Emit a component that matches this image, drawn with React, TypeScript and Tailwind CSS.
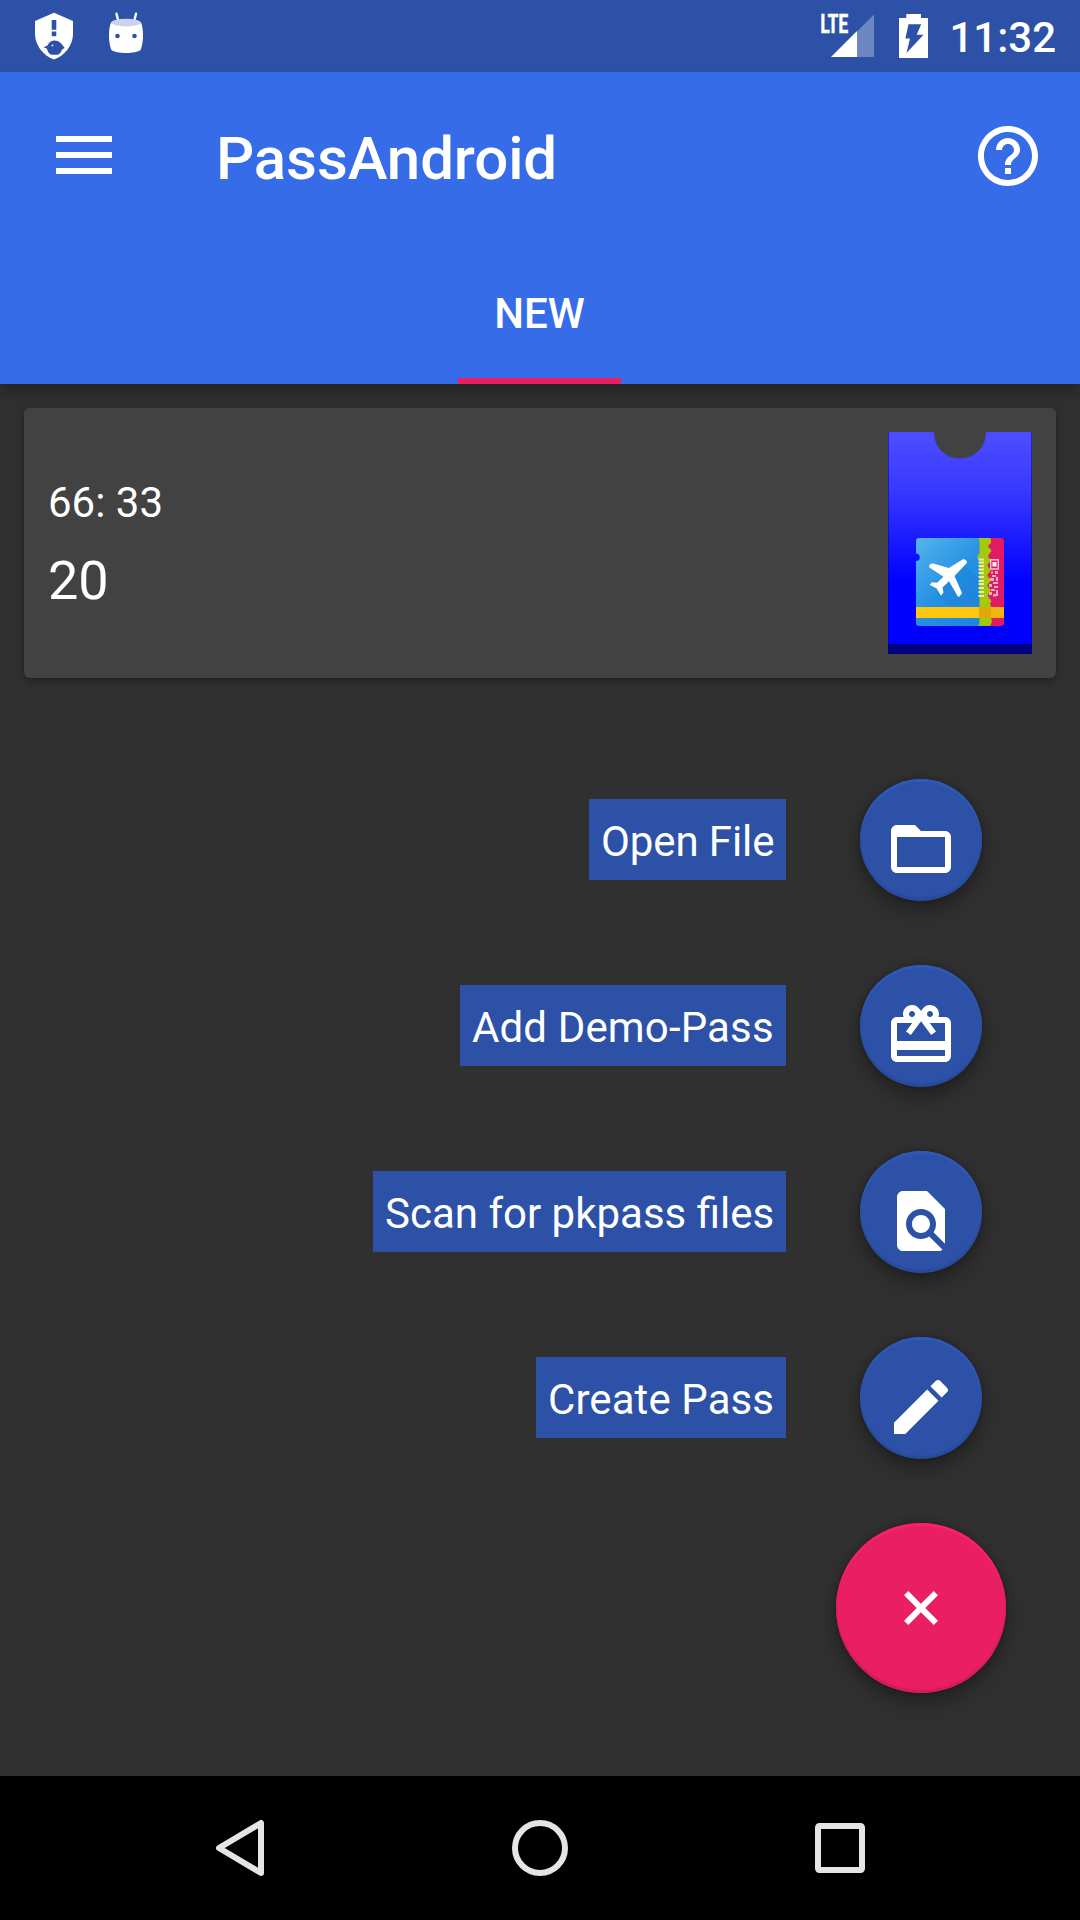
import type { ReactNode } from "react";

const icons = {
  folder:
    "M20 6h-8l-2-2H4c-1.1 0-1.99.9-1.99 2L2 18c0 1.1.9 2 2 2h16c1.1 0 2-.9 2-2V8c0-1.1-.9-2-2-2zm0 12H4V8h16v10z",
  gift: "M20 6h-2.18c.11-.31.18-.65.18-1 0-1.66-1.34-3-3-3-1.05 0-1.96.54-2.5 1.35l-.5.67-.5-.68C10.96 2.54 10.05 2 9 2 7.34 2 6 3.34 6 5c0 .35.07.69.18 1H4c-1.11 0-1.99.89-1.99 2L2 19c0 1.11.89 2 2 2h16c1.11 0 2-.89 2-2V8c0-1.11-.89-2-2-2zm-5-2c.55 0 1 .45 1 1s-.45 1-1 1-1-.45-1-1 .45-1 1-1zM9 4c.55 0 1 .45 1 1s-.45 1-1 1-1-.45-1-1 .45-1 1-1zm11 15H4v-2h16v2zm0-5H4V8h5.08L7 10.83 8.62 12 11 8.76l1-1.36 1 1.36L15.38 12 17 10.83 14.92 8H20v6z",
  scan: "M20 19.59V8l-6-6H6c-1.1 0-1.99.9-1.99 2L4 20c0 1.1.89 2 1.99 2H18c.45 0 .85-.15 1.19-.4l-4.43-4.43c-.8.52-1.74.83-2.76.83-2.76 0-5-2.24-5-5s2.24-5 5-5 5 2.24 5 5c0 1.02-.31 1.96-.83 2.75L20 19.59zM9 13c0 1.66 1.34 3 3 3s3-1.34 3-3-1.34-3-3-3-3 1.34-3 3z",
  pencil:
    "M3 17.25V21h3.75L17.81 9.94l-3.75-3.75L3 17.25zM20.71 7.04c.39-.39.39-1.02 0-1.41l-2.34-2.34c-.39-.39-1.02-.39-1.41 0l-1.83 1.83 3.75 3.75 1.83-1.83z",
  help: "M11 18h2v-2h-2v2zm1-16C6.48 2 2 6.48 2 12s4.48 10 10 10 10-4.48 10-10S17.52 2 12 2zm0 18c-4.41 0-8-3.59-8-8s3.59-8 8-8 8 3.59 8 8-3.59 8-8 8zm0-14c-2.21 0-4 1.79-4 4h2c0-1.1.9-2 2-2s2 .9 2 2c0 2-3 1.75-3 5h2c0-2.25 3-2.5 3-5 0-2.21-1.79-4-4-4z",
  plus: "M19 13h-6v6h-2v-6H5v-2h6V5h2v6h6v2z",
};

function Icon({ d, className = "" }: { d: string; className?: string }) {
  return (
    <svg viewBox="0 0 24 24" className={`size-[72px] shrink-0 fill-white ${className}`}>
      <path d={d} />
    </svg>
  );
}

function StatusBar() {
  return (
    <div className="flex h-[72px] items-center bg-[#2c51a7] pl-[34px] pr-[24px]">
      <svg className="h-[72px] w-[40px]" viewBox="34 0 40 72">
        <path d="M54 12.700 73 21v13c0 11-8 21.500-19 25.500C43 55.500 35 45 35 34V21z" fill="#fff" />
        <path d="M51.700 20h4.600v9.700h-4.600zM51.700 31.600h4.600v4.600h-4.600z" fill="#2c51a7" />
        <path d="M43.500 47.300l4-1.800c1.500-3.500 4-5 7-5 4.500 0 7.500 3.500 10.200 7.500l-2.700 1.500c-.6 2.500-2 4-4 5.300h-7c-2.500-1.500-3.500-3.500-4-6z" fill="#2c51a7" />
        <circle cx="52.500" cy="45.400" r=".9" fill="#fff" />
      </svg>
      <svg className="ml-[34px] h-[72px] w-[36px]" viewBox="108 0 36 72">
        <path d="M116.500 13.700l2 8M136 13.700l-2 8" stroke="#fff" strokeWidth="2.400" strokeLinecap="round" />
        <path d="M111 22.500c-1.500 4-2 8-2 12.500 0 6 1 12 2.500 15 2.500 2 8 3 14.500 3s12-1 14.500-3c1.500-3 2.500-9 2.500-15 0-4.500-.5-8.500-2-12.500z" fill="#fff" />
        <ellipse cx="126" cy="22.600" rx="15" ry="3.800" fill="#cad3ea" />
        <circle cx="117.500" cy="36" r="2.300" fill="#2c51a7" />
        <circle cx="134.500" cy="36" r="2.300" fill="#2c51a7" />
      </svg>
      <svg className="ml-auto h-[72px] w-[56px]" viewBox="819 0 56 72">
        <text
          x="820.500"
          y="33.400"
          textLength="27.500"
          lengthAdjust="spacingAndGlyphs"
          fill="#fff"
          stroke="#fff"
          strokeWidth=".7"
          fontFamily="Roboto"
          fontWeight="700"
          fontSize="26"
        >
          LTE
        </text>
        <path d="M831 57 857 31v26z" fill="#fff" />
        <path d="M857 31.500 874 14.500V57h-17z" fill="#6d87c2" />
      </svg>
      <svg className="ml-[24px] h-[72px] w-[29px]" viewBox="899 0 29 72">
        <path d="M906.300 14h14.700v4h7v40h-29V18h7.300z" fill="#fff" />
        <path d="M908.500 24.300h12.700l-4.500 10.400h6.800L906.500 53l3.500-14.600h-4.600z" fill="#2c51a7" />
      </svg>
      <span className="ml-[21px] pt-[4px] text-[42px] font-medium leading-[68px]">11:32</span>
    </div>
  );
}

function Header() {
  return (
    <header className="relative z-10 h-[312px] bg-[#366ce8] shadow-[0_8px_14px_rgba(0,0,0,0.25)]">
      <div className="flex h-[168px] items-center pl-[56px] pr-[36px]">
        <div className="flex w-[56px] flex-col gap-[10px] pb-[2px]">
          <span className="h-[6px] bg-white" />
          <span className="h-[6px] bg-white" />
          <span className="h-[6px] bg-white" />
        </div>
        <h1 className="ml-[104px] pt-[5px] text-[60px] font-medium leading-[70px] tracking-[-0.1px]">PassAndroid</h1>
        <Icon d={icons.help} className="ml-auto" />
      </div>
      <div className="flex h-[144px] justify-center pr-px">
        <div className="flex w-[163px] items-center justify-center border-b-[6px] border-[#e91e63] pt-[9px] text-[42px] font-medium">
          NEW
        </div>
      </div>
    </header>
  );
}

function TicketArt() {
  return (
    <svg className="h-[222px] w-[144px]" viewBox="888 432 144 222">
      <defs>
        <linearGradient id="ticket" x1="0" y1="0" x2="0" y2="1">
          <stop offset="0" stopColor="#4d4dff" />
          <stop offset=".25" stopColor="#3a3aff" />
          <stop offset=".68" stopColor="#0000ff" />
        </linearGradient>
        <linearGradient id="sky" x1="0" y1="0" x2=".7" y2="1">
          <stop offset="0" stopColor="#56b3ef" />
          <stop offset=".6" stopColor="#2591e3" />
          <stop offset="1" stopColor="#1e88e0" />
        </linearGradient>
      </defs>
      <path d="M888 432h46c0 15 11 26.500 26 26.500S986 447 986 432h46v222H888z" fill="url(#ticket)" />
      <path d="M888.500 432v212M1031.500 432v212" stroke="#000080" strokeOpacity=".5" />
      <path d="M888 644h144v10H888z" fill="#000080" />
      <path d="M980 538h21a3 3 0 0 1 3 3v82a3 3 0 0 1-3 3h-21z" fill="#e01b63" />
      <path
        d="M970 538H990Q992 540 991 543Q987 545.500 989 548Q993 550 990 553Q987 556 989 558Q992 560 989 563Q986 565 989 568Q992 570 989 573Q986 575 989 578Q992 580 989 583Q986 585 989 588Q992 590 989 593Q987 595 989 598Q993 601 990 603L991 607V618Q993 622 990 626H970z"
        fill="#a6c80a"
      />
      <path
        d="M919 538h58.500a2 2 0 0 1 2 2v13.500a4 4 0 0 0 0 7V624a2 2 0 0 1-2 2H919a3 3 0 0 1-3-3v-62a3.800 3.800 0 0 0 0-7.600V541a3 3 0 0 1 3-3z"
        fill="url(#sky)"
      />
      <path d="M951 576l12-13 16 16v26h-32l-10-10z" fill="#1c7fd2" fillOpacity=".35" />
      <path d="M916 607h63v11h-63z" fill="#ffc60f" />
      <path d="M979 607h25v11h-25z" fill="#f3b40d" />
      <path d="M979 607h12v11h-12z" fill="#dda90c" />
      <path
        d="M962.500 559.500c2-1 4.800.8 4.300 3.500L954.500 576l7.500 17-2.500 3.500-1.500.2-9-15.500-6.500 6.300 1 5-2.500 3.200-4.500-7.500-6.800-3.200 2.200-2.800 5.200.5 6.300-6-14-9.200-.2-2.500 3.200-1.700 16.500 4.800z"
        fill="#fff"
      />
      <path
        d="M978.500 559.500h5.500M978.500 562.500h5.500M978.500 566h5.500M978.500 569.500h5.500M978.500 573h5.500M978.500 577h5.500M978.500 581h5.500M978.500 584h5.500M978.500 588h5.500M978.500 592h5.500M978.500 596h5.500"
        stroke="#e1ecb4"
        strokeWidth="1.800"
      />
      <path d="M990.700 559.700h7.600v9.300h-7.600z" fill="none" stroke="#f6c3d5" strokeWidth="1.400" />
      <path d="M992.500 562h4v4.500h-4z" fill="#fff" />
      <path
        d="M991 571.500h2v2h-2zM995 571h3v3h-3zM992 575h4v2h-4zM996 577h2v4h-2zM990 578h4v3h-4zM993 582h5v2h-5zM989 584h3v3h-3zM994 586h4v2h-4zM996 590h2v6h-2zM991 589h4v2h-4zM989 592h3v3h-3zM993 594h3v2.500h-3z"
        fill="#f3b1c8"
      />
    </svg>
  );
}

function PassCard() {
  return (
    <section className="mx-[24px] mt-[24px] flex h-[270px] items-center justify-between rounded-[6px] bg-[#424242] px-[24px] shadow-[0_3px_7px_rgba(0,0,0,0.35)]">
      <div className="pt-[5px]">
        <p className="text-[42px] leading-[56px]">66: 33</p>
        <p className="mt-[14px] text-[54px] leading-[72px]">20</p>
      </div>
      <TicketArt />
    </section>
  );
}

function Action({ label, labelClass = "", children }: { label: string; labelClass?: string; children: ReactNode }) {
  return (
    <div className="flex items-start">
      <span
        className={`mt-[20px] h-[81px] whitespace-nowrap bg-[#2c51a7] pl-[12px] pt-[4px] text-[42px] leading-[77px] ${labelClass}`}
      >
        {label}
      </span>
      <button className="ml-[74px] flex size-[122px] items-center justify-center rounded-full bg-[#2c51a7] pt-[18px] shadow-[0_10px_20px_rgba(0,0,0,0.3),0_0_6px_rgba(0,0,0,0.25),inset_0_3px_1px_rgba(48,90,184,0.9),inset_0_-3px_1px_rgba(40,74,152,0.9)]">
        {children}
      </button>
    </div>
  );
}

function NavBar() {
  return (
    <nav className="flex h-[144px] items-center justify-center gap-[228px] bg-black">
      <svg className="size-[72px]" viewBox="204 1812 72 72" fill="none" stroke="#e5e5e5" strokeWidth="6" strokeLinejoin="round">
        <path d="M219 1848 261 1823v50z" />
      </svg>
      <svg className="size-[72px]" viewBox="504 1812 72 72" fill="none" stroke="#e5e5e5" strokeWidth="6">
        <circle cx="540" cy="1848" r="25" />
      </svg>
      <svg className="size-[72px]" viewBox="804 1812 72 72" fill="none" stroke="#e5e5e5" strokeWidth="6">
        <rect x="818" y="1826" width="44" height="44" rx="1.500" />
      </svg>
    </nav>
  );
}

export default function App() {
  return (
    <div className="flex h-[1920px] w-[1080px] flex-col overflow-hidden bg-[#303030] font-[Roboto,sans-serif] text-white">
      <StatusBar />
      <Header />
      <main className="flex flex-1 flex-col">
        <PassCard />
        <div className="mt-[101px] flex flex-col items-end gap-[64px] pr-[98px]">
          <Action label="Open File" labelClass="w-[197px] tracking-[-0.1px]">
            <Icon d={icons.folder} />
          </Action>
          <Action label="Add Demo-Pass" labelClass="w-[326px] tracking-[0.14px]">
            <Icon d={icons.gift} />
          </Action>
          <Action label="Scan for pkpass files" labelClass="w-[413px]">
            <Icon d={icons.scan} />
          </Action>
          <Action label="Create Pass" labelClass="w-[250px] tracking-[0.08px]">
            <Icon d={icons.pencil} />
          </Action>
        </div>
        <button className="mr-[74px] mt-[64px] flex size-[170px] items-center justify-center self-end rounded-full bg-[#e91e63] shadow-[0_10px_20px_rgba(0,0,0,0.3),0_0_7px_rgba(0,0,0,0.25),inset_0_3px_1px_rgba(255,32,108,0.9),inset_0_-3px_1px_rgba(210,28,90,0.9)]">
          <Icon d={icons.plus} className="rotate-45" />
        </button>
      </main>
      <NavBar />
    </div>
  );
}
